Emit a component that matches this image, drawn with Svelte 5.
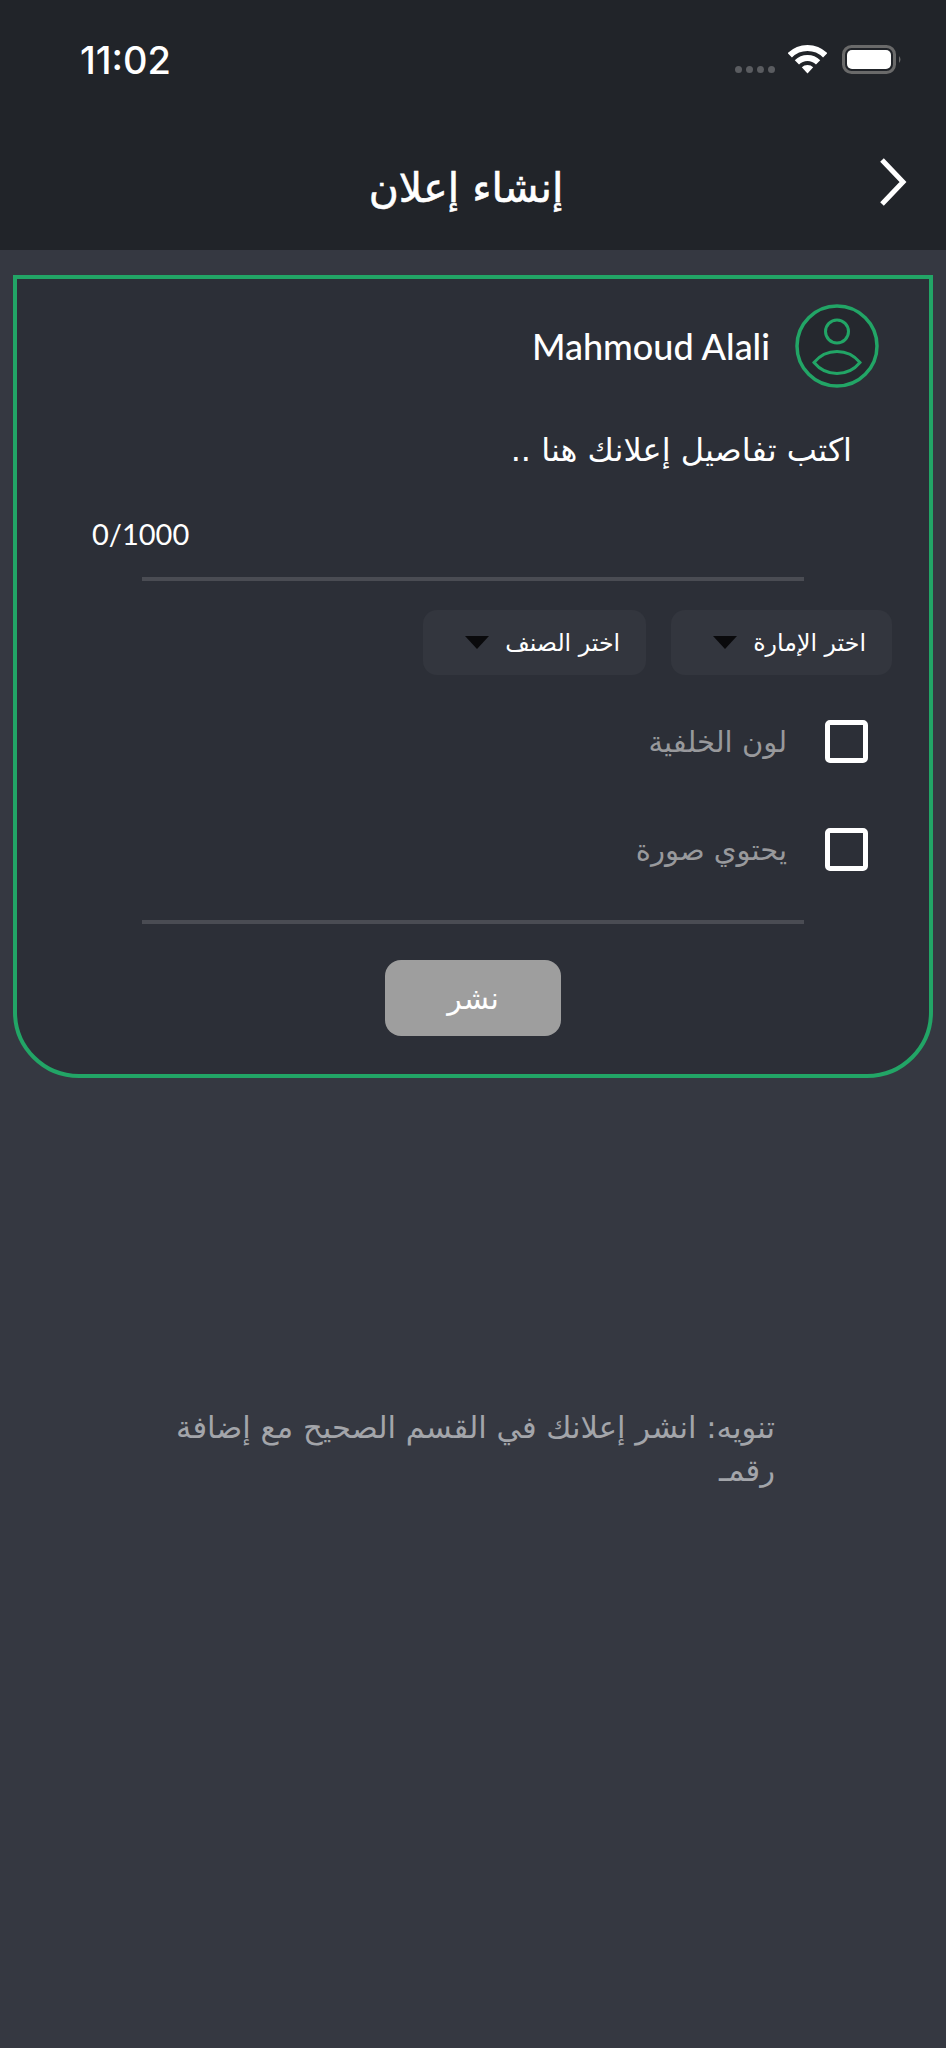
<script>
    const checks = ['لون الخلفية', 'يحتوي صورة'];
    const selects = ['اختر الإمارة', 'اختر الصنف'];
</script>

<div class="page" dir="rtl">
    <header class="top">
        <div class="status" dir="ltr">
            <span class="time">11:02</span>
            <div class="status-icons">
                <span class="dots"><i></i><i></i><i></i><i></i></span>
                <svg class="wifi" width="39" height="30" viewBox="0 0 39 30">
                    <g fill="none" stroke="#fff" stroke-width="6">
                        <path d="M1.800 11.300 A25 25 0 0 1 37.200 11.300"/>
                        <path d="M8.900 18.400 A15 15 0 0 1 30.100 18.400"/>
                    </g>
                    <path d="M13.800 23.300 A8 8 0 0 1 25.200 23.300 L19.500 29.500 Z" fill="#fff"/>
                </svg>
                <svg class="battery" width="60" height="29" viewBox="0 0 60 29">
                    <rect x="1.500" y="1.500" width="51" height="26" rx="8" fill="none" stroke="#6a6a6a" stroke-width="3"/>
                    <rect x="5" y="5" width="44" height="19" rx="5" fill="#fff"/>
                    <path d="M57 11 Q60 14.500 57 18 Z" fill="#6a6a6a"/>
                </svg>
            </div>
        </div>
        <div class="nav">
            <svg class="back" width="32" height="50" viewBox="0 0 32 50">
                <path d="M6 3 L27 25 L6 47" fill="none" stroke="#fff" stroke-width="5"/>
            </svg>
            <h1>إنشاء إعلان</h1>
        </div>
    </header>

    <section class="card">
        <div class="user">
            <svg width="84" height="84" viewBox="0 0 84 84">
                <circle cx="42" cy="42" r="40" fill="#25282e" stroke="#22a566" stroke-width="3.500"/>
                <g fill="none" stroke="#22a566" stroke-width="3">
                    <circle cx="42" cy="27.500" r="11.500"/>
                    <path d="M19 58.500 C26 50 34 47.500 42 47.500 C50 47.500 58 50 65 58.500 C58 67 50 69.500 42 69.500 C34 69.500 26 67 19 58.500 Z"/>
                </g>
            </svg>
            <span class="name">Mahmoud Alali</span>
        </div>
        <p class="hint">اكتب تفاصيل إعلانك هنا ..</p>
        <div class="count" dir="ltr">0/1000</div>
        <div class="rule"></div>
        <div class="selects">
            {#each selects as label}
                <div class="select">
                    <span>{label}</span>
                    <i class="caret"></i>
                </div>
            {/each}
        </div>
        <div class="checks">
            {#each checks as label}
                <div class="check">
                    <span class="box"></span>
                    <span class="check-label">{label}</span>
                </div>
            {/each}
        </div>
        <div class="rule rule-low"></div>
        <button class="publish">نشر</button>
    </section>

    <p class="note">تنويه: انشر إعلانك في القسم الصحيح مع إضافة رقمـ</p>
</div>

<style>
    :global(body) {
        margin: 0;
        background: #353841;
    }

    .page {
        width: 946px;
        height: 2048px;
        background: #353841;
        color: #fff;
        font-family: "DejaVu Sans", sans-serif;
        overflow: hidden;
    }

    .top {
        background: #212429;
        height: 250px;
        overflow: hidden;
    }

    .status {
        display: flex;
        justify-content: space-between;
        align-items: center;
        padding: 40px 44px 0 80px;
        height: 40px;
    }

    .time {
        font-family: "Inter", sans-serif;
        font-size: 38px;
        font-weight: 500;
    }

    .status-icons {
        display: flex;
        align-items: flex-end;
        margin-bottom: 2px;
    }

    .dots {
        display: flex;
        gap: 4px;
        margin: 0 13px 1px 0;
    }

    .dots i {
        width: 7px;
        height: 7px;
        border-radius: 50%;
        background: #5a5c60;
    }

    .wifi {
        margin-right: 15px;
    }

    .nav {
        display: flex;
        align-items: center;
        height: 80px;
        margin-top: 62px;
        padding-right: 38px;
    }

    .nav h1 {
        font-size: 41px;
        font-weight: 400;
        -webkit-text-stroke: 0.6px #fff;
        margin: 0;
        flex: 1;
        text-align: center;
        padding: 12px 0 0 56px;
    }

    .card {
        margin: 25px 13px 0;
        height: 803px;
        box-sizing: border-box;
        border: 4px solid #22a566;
        border-radius: 0 0 66px 66px;
        background: #2c2f37;
        padding: 25px 37px 0;
        display: flex;
        flex-direction: column;
    }

    .user {
        display: flex;
        align-items: center;
        gap: 25px;
        padding-right: 13px;
    }

    .name {
        font-family: "Lato", sans-serif;
        font-size: 36px;
        font-weight: 500;
    }

    .hint {
        margin: 40px 0 0;
        padding-right: 40px;
        font-size: 32px;
        line-height: 44px;
    }

    .count {
        margin: 44px 0 0;
        padding-left: 38px;
        font-size: 29px;
        line-height: 36px;
        font-family: "Lato", sans-serif;
    }

    .rule {
        height: 4px;
        background: #4a4c53;
        margin: 25px 88px 0;
    }

    .selects {
        display: flex;
        gap: 25px;
        margin-top: 29px;
    }

    .select {
        display: flex;
        align-items: center;
        gap: 16px;
        height: 65px;
        padding: 0 26px 0 42px;
        border-radius: 14px;
        background: #33363e;
        font-size: 23.700px;
    }

    .caret {
        width: 0;
        height: 0;
        border-left: 12px solid transparent;
        border-right: 12px solid transparent;
        border-top: 13px solid #0a0a0c;
    }

    .checks {
        display: flex;
        flex-direction: column;
        gap: 65px;
        margin-top: 45px;
        padding-right: 24px;
    }

    .check {
        display: flex;
        align-items: center;
        gap: 38px;
        height: 43px;
    }

    .box {
        box-sizing: border-box;
        width: 43px;
        height: 43px;
        border: 5px solid #fff;
        border-radius: 5px;
    }

    .check-label {
        font-size: 29px;
        color: #98999c;
    }

    .rule-low {
        margin-top: 49px;
    }

    .publish {
        align-self: center;
        margin-top: 36px;
        width: 176px;
        height: 76px;
        border: 0;
        border-radius: 16px;
        background: #9e9e9e;
        color: #fff;
        font-size: 30px;
        font-family: inherit;
    }

    .note {
        margin: 328px 171px 0 150px;
        font-size: 30.600px;
        line-height: 43px;
        color: #a3a5aa;
    }
</style>
